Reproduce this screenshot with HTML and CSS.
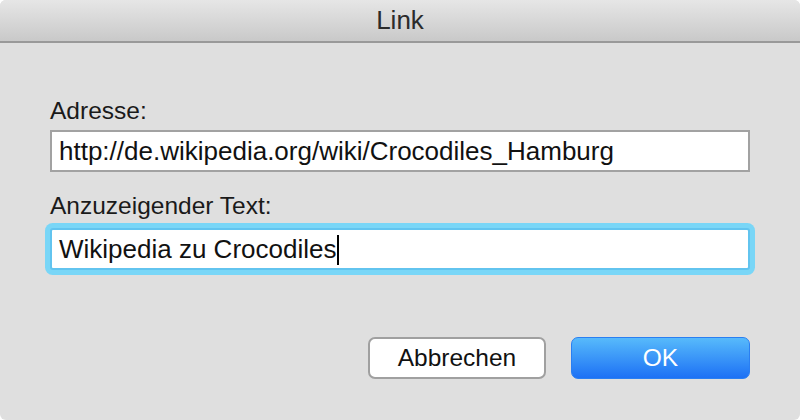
FILE: index.html
```html
<!DOCTYPE html>
<html lang="de">
<head>
    <meta charset="UTF-8">
    <title>Link</title>
    <link rel="stylesheet" href="styles.css">
</head>
<body>

    <!-- Dialog window -->
    <div class="window">
        <div class="titlebar">Link</div>

        <div class="content">
            <label class="label">Adresse:</label>
            <div class="field">http://de.wikipedia.org/wiki/Crocodiles_Hamburg</div>

            <label class="label label-second">Anzuzeigender Text:</label>
            <div class="field field-focus">Wikipedia zu Crocodiles<span class="caret"></span></div>

            <!-- Buttons -->
            <div class="buttons">
                <button class="btn">Abbrechen</button>
                <button class="btn btn-default">OK</button>
            </div>
        </div>
    </div>

</body>
</html>
```

FILE: styles.css
```css
/* Global Reset */
* {
    margin: 0;
    padding: 0;
    box-sizing: border-box;
}

body {
    font-family: 'Liberation Sans', Arial, sans-serif;
    background-color: #ffffff;
    color: #1a1a1a;
}

/* Window */
.window {
    width: 800px;
    height: 420px;
    background-color: #dfdfdf;
    border-radius: 6px;
    overflow: hidden;
}

.titlebar {
    height: 43px;
    line-height: 41px;
    text-align: center;
    font-size: 26px;
    color: #2b2b2b;
    background: linear-gradient(#e6e6e6, #c9c9c9);
    border-bottom: 2px solid #999;
}

/* Form */
.content {
    display: flex;
    flex-direction: column;
    padding: 53px 50px 0 50px;
}

.label {
    display: block;
    font-size: 24.5px;
    line-height: 30px;
    color: #1a1a1a;
    margin-bottom: 4px;
}

.label-second {
    margin-top: 19px;
    margin-bottom: 7px;
}

.field {
    height: 42px;
    line-height: 38px;
    padding: 0 7px;
    font-size: 26px;
    color: #111;
    background-color: #fff;
    border: 2px solid #a2a2a2;
    white-space: nowrap;
}

.field-focus {
    border-color: #62c4ef;
    border-radius: 3px;
    box-shadow: 0 0 0 5px #79d6f7;
}

.caret {
    display: inline-block;
    width: 2px;
    height: 30px;
    margin-left: 1px;
    vertical-align: -7px;
    background-color: #000;
}

/* Buttons */
.buttons {
    display: flex;
    justify-content: flex-end;
    gap: 25px;
    margin-top: 67px;
}

.btn {
    width: 178px;
    height: 42px;
    font-family: 'Liberation Sans', Arial, sans-serif;
    font-size: 24.5px;
    color: #111;
    background-color: #fff;
    border: 2px solid #a0a0a0;
    border-radius: 7px;
}

.btn-default {
    width: 179px;
    color: #fff;
    border: 1px solid #2a7ff2;
    background: linear-gradient(#57bafb, #1d71f5);
}
```
